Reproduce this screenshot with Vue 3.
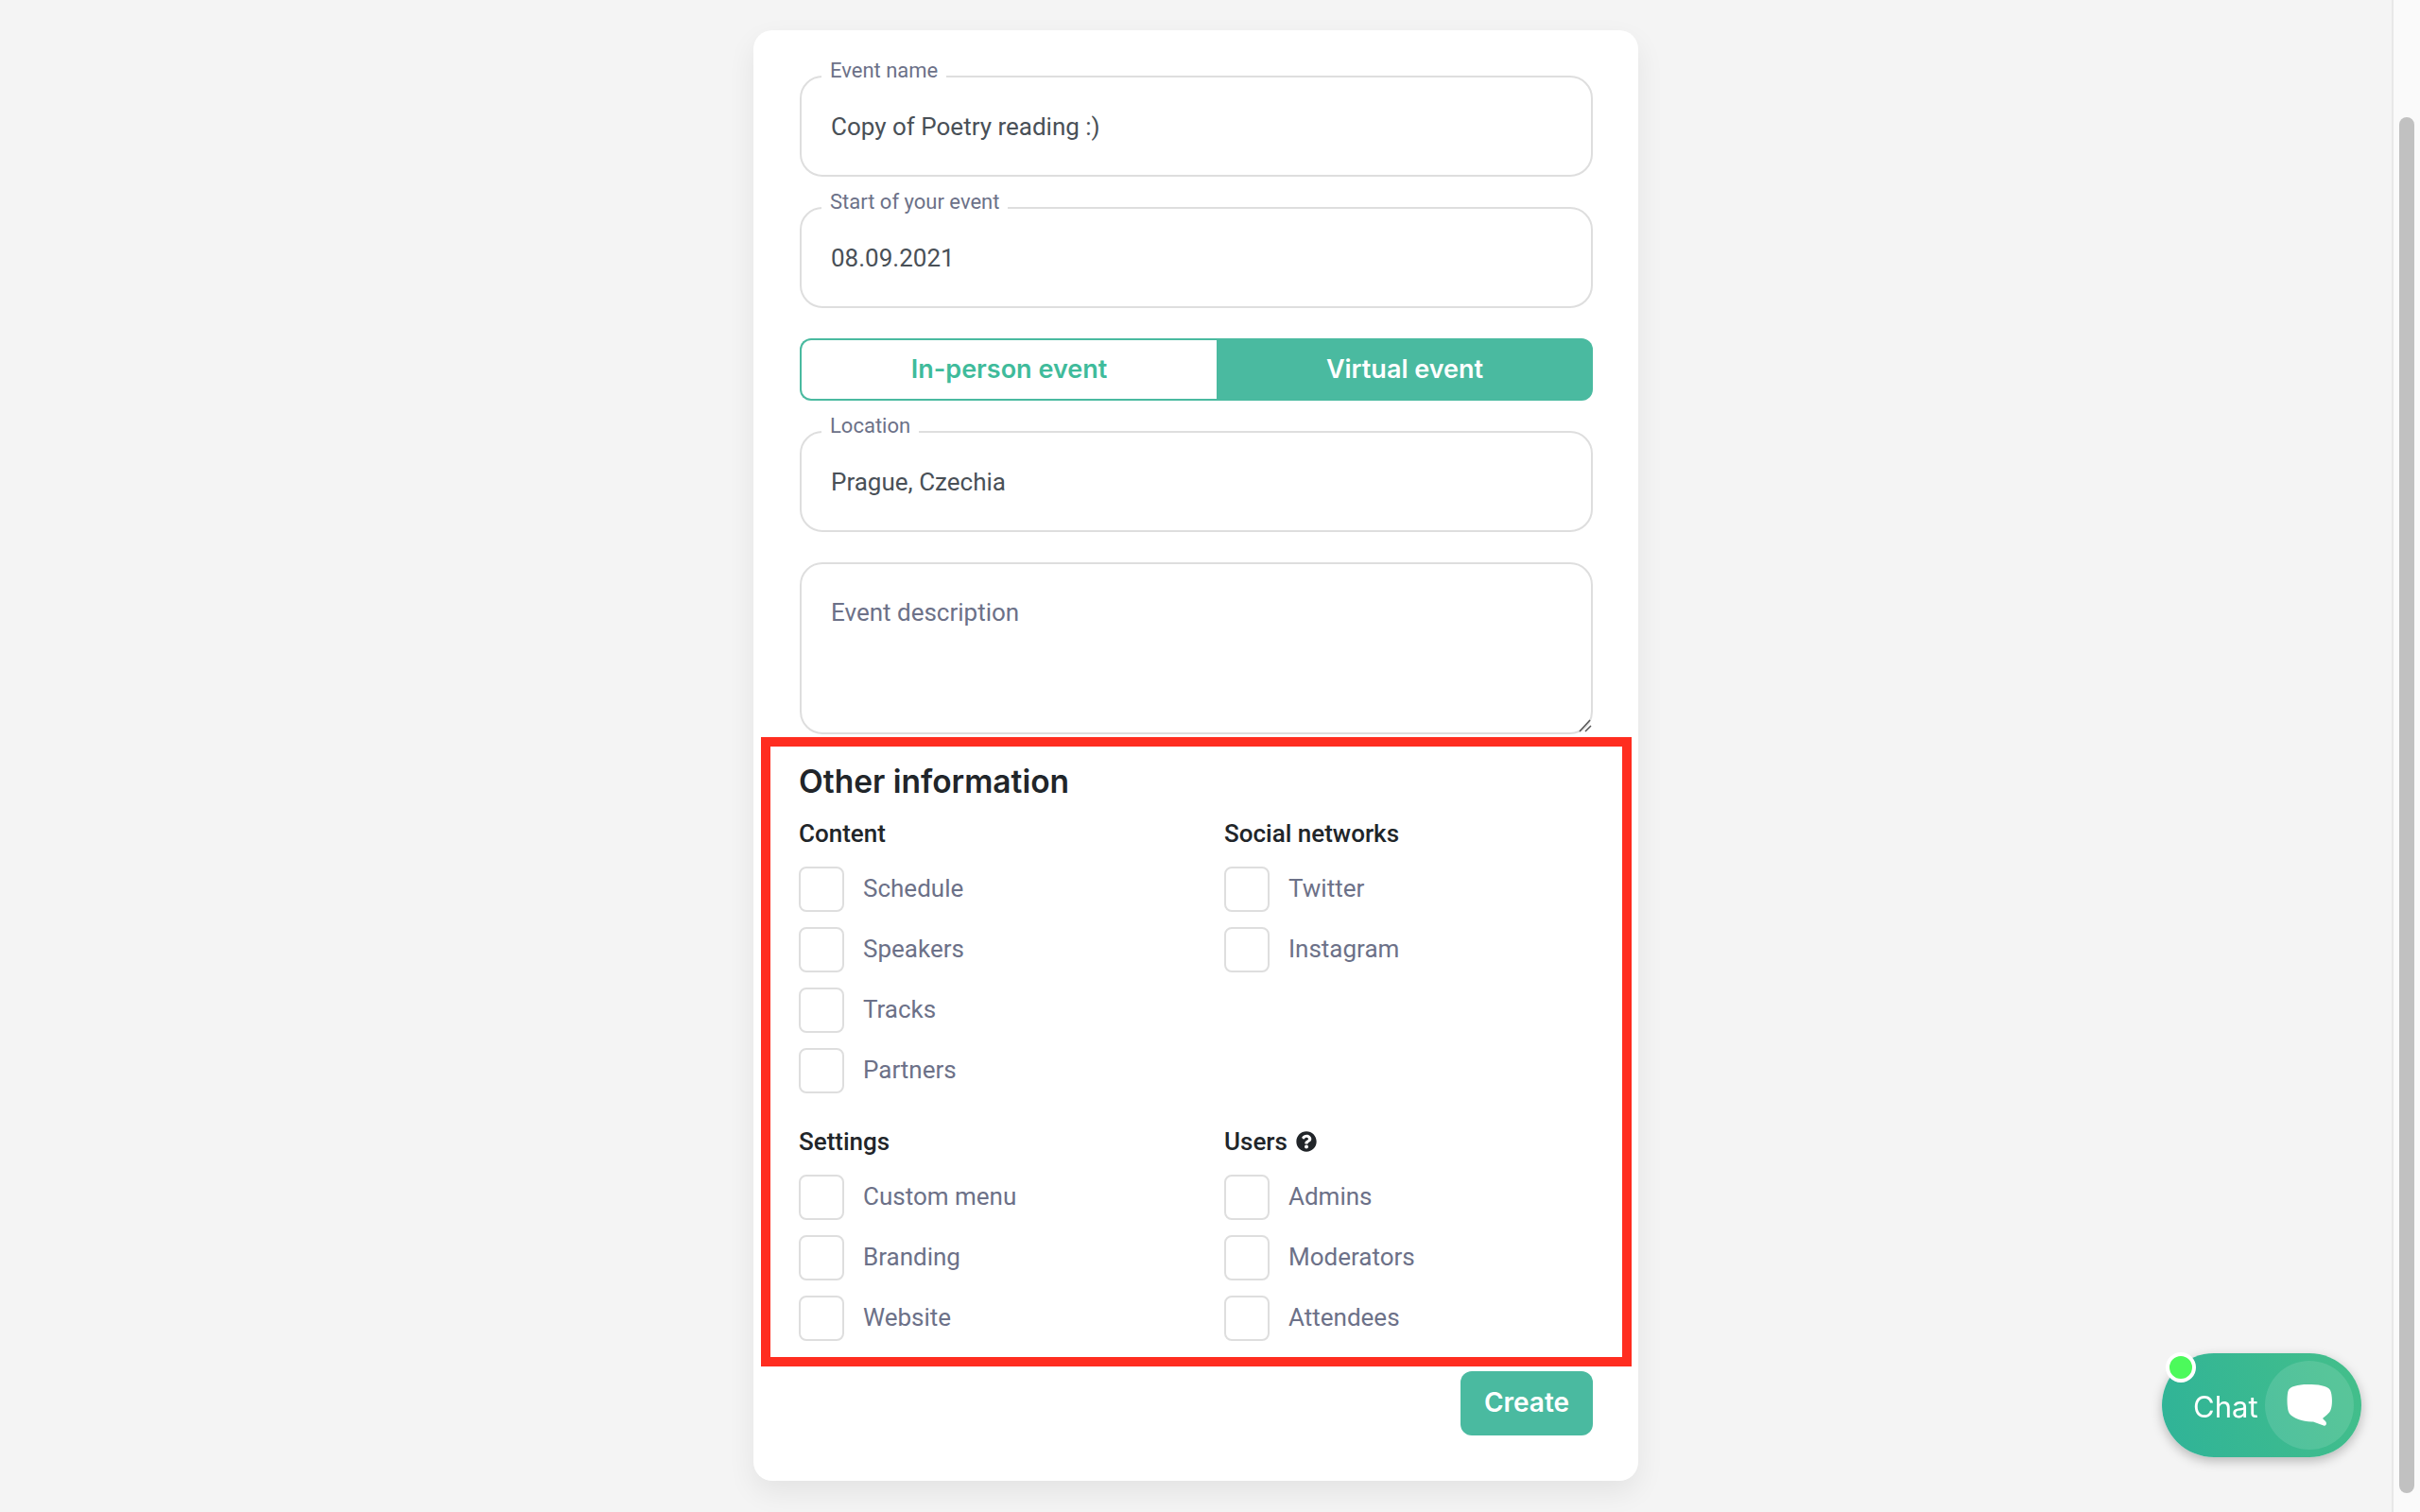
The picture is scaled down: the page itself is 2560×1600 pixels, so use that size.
<template>
  <div class="page">
    <main class="content">
      <form class="card" @submit.prevent>
        <div class="field">
          <label class="field-label">Event name</label>
          <input v-model="form.name" class="field-input" type="text">
        </div>
        <div class="field">
          <label class="field-label">Start of your event</label>
          <input v-model="form.start" class="field-input" type="text">
        </div>

        <div class="toggle">
          <button type="button" class="toggle-btn toggle-left">In-person event</button>
          <button type="button" class="toggle-btn toggle-right">Virtual event</button>
        </div>

        <div class="field field-tight">
          <label class="field-label">Location</label>
          <input v-model="form.location" class="field-input" type="text">
        </div>
        <div class="field field-area-wrap">
          <textarea v-model="form.description" class="field-area" placeholder="Event description"></textarea>
          <svg class="grip" width="14" height="14" viewBox="0 0 14 14">
            <path d="M1 13 L12 1 M7 13 L13 7" stroke="#555" stroke-width="1.500" fill="none"/>
          </svg>
        </div>

        <section class="other">
          <h2 class="other-title">Other information</h2>
          <div class="other-grid">
            <div v-for="group in groups" :key="group.title" class="group">
              <h3 class="group-title">
                {{ group.title }}
                <svg v-if="group.help" class="help" viewBox="0 0 512 512">
                  <path fill="#212529" d="M504 256c0 136.997-111.043 248-248 248S8 392.997 8 256C8 119.083 119.043 8 256 8s248 111.083 248 248zM262.655 90c-54.497 0-89.255 22.957-116.549 63.758-3.536 5.286-2.353 12.415 2.715 16.258l34.699 26.31c5.205 3.947 12.621 3.008 16.665-2.122 17.864-22.658 30.113-35.797 57.303-35.797 20.429 0 45.698 13.148 45.698 32.958 0 14.976-12.363 22.667-32.534 33.976C247.128 238.528 216 254.941 216 296v4c0 6.627 5.373 12 12 12h56c6.627 0 12-5.373 12-12v-1.333c0-28.462 83.186-29.647 83.186-106.667 0-58.002-60.165-102-116.531-102zM256 338c-25.365 0-46 20.635-46 46 0 25.364 20.635 46 46 46s46-20.636 46-46c0-25.365-20.635-46-46-46z"/>
                </svg>
              </h3>
              <label v-for="item in group.items" :key="item" class="check">
                <input type="checkbox" class="check-box">
                <span class="check-text">{{ item }}</span>
              </label>
            </div>
          </div>
        </section>

        <div class="actions">
          <button type="submit" class="create">Create</button>
        </div>
      </form>
    </main>

    <aside class="scrollbar">
      <div class="scrollbar-thumb"></div>
    </aside>

    <button class="chat">
      <span class="chat-dot"></span>
      <span class="chat-text">Chat</span>
      <span class="chat-circle">
        <svg width="48" height="44" viewBox="0 0 48 44">
          <path fill="#fff" d="M22 0C33 0 43 1 46 6C48.500 11 48.500 22 46.500 27C45 31 41 33 38 36L41 39C43 41 41.500 44.500 39 43.500L28 39.500C18 40 7 36 3 31C0 27 0 12 1.500 7C3 2 12 0 22 0Z"/>
        </svg>
      </span>
    </button>
  </div>
</template>

<script setup>
import { reactive } from 'vue'

const form = reactive({
  name: 'Copy of Poetry reading :)',
  start: '08.09.2021',
  location: 'Prague, Czechia',
  description: ''
})

const groups = [
  { title: 'Content', items: ['Schedule', 'Speakers', 'Tracks', 'Partners'] },
  { title: 'Social networks', items: ['Twitter', 'Instagram'] },
  { title: 'Settings', items: ['Custom menu', 'Branding', 'Website'] },
  { title: 'Users', help: true, items: ['Admins', 'Moderators', 'Attendees'] }
]
</script>

<style>
html, body { margin: 0; background: #f4f4f4; overflow: hidden; }
</style>

<style scoped>
.page {
  display: flex;
  height: 1600px;
  font-family: Roboto, "Liberation Sans", sans-serif;
  color: #212529;
}

.content { flex: 1; display: flex; justify-content: center; padding-top: 32px; box-sizing: border-box; }

.card {
  width: 936px;
  height: 1535px;
  box-sizing: border-box;
  padding: 48px 48px 48px 49px;
  background: #fff;
  border-radius: 20px;
  box-shadow: 0 12px 30px rgba(0, 0, 0, 0.07);
}

.field { position: relative; margin-bottom: 32px; }
.field-tight { margin-bottom: 32px; }
.field-area-wrap { margin-bottom: 0; }
.field-label {
  position: absolute;
  left: 23px;
  top: -19px;
  padding: 0 9px;
  background: #fff;
  font-size: 22px;
  line-height: 28px;
  color: #6c7188;
}
.field-input, .field-area {
  display: block;
  width: 100%;
  box-sizing: border-box;
  border: 2px solid #dedede;
  border-radius: 24px;
  padding: 0 31px;
  background: #fff;
  font-family: inherit;
  font-size: 26px;
  color: #495057;
  outline: none;
}
.field-input { height: 107px; }
.field-area { height: 182px; padding-top: 35px; line-height: 32px; resize: none; }
.field-area::placeholder { color: #6c7188; opacity: 1; }
.grip { position: absolute; right: 1px; bottom: 2px; }

.toggle { display: flex; height: 66px; margin-bottom: 32px; }
.toggle-btn {
  font-family: Inter, sans-serif;
  font-size: 27px;
  font-weight: 600;
  padding: 0 0 2px;
  cursor: pointer;
}
.toggle-left {
  width: 441px;
  background: #fff;
  color: #3fbb9b;
  border: 2px solid #4abaa0;
  border-right: 0;
  border-radius: 12px 0 0 12px;
}
.toggle-right {
  flex: 1;
  background: #4abaa0;
  color: #fff;
  border: 0;
  border-radius: 0 12px 12px 0;
}

.other {
  margin: 3px -41px 0;
  padding: 13px 30px 17px;
  border: 10px solid #ff2d20;
}
.other-title {
  margin: 0 0 19px;
  font-family: Inter, sans-serif;
  font-size: 33.500px;
  line-height: 48px;
  font-weight: 600;
  color: #212529;
}
.other-grid { display: grid; grid-template-columns: 450px 1fr; row-gap: 39px; }
.group { display: flex; flex-direction: column; gap: 16px; }
.group-title {
  display: flex;
  align-items: center;
  gap: 9px;
  margin: 0 0 7px;
  font-size: 26px;
  line-height: 24px;
  font-weight: 500;
  color: #212529;
}
.help { width: 22px; height: 22px; }
.check { display: flex; align-items: center; gap: 20px; font-size: 26px; color: #6c7188; }
.check-text { margin-top: -2px; }
.check-box {
  appearance: none;
  width: 48px;
  height: 48px;
  margin: 0;
  background: #fff;
  border: 2px solid #dedede;
  border-radius: 8px;
}

.actions { display: flex; justify-content: flex-end; margin-top: 5px; }
.create {
  width: 140px;
  height: 68px;
  border: 0;
  border-radius: 12px;
  background: #4abaa0;
  color: #fff;
  font-family: Inter, sans-serif;
  font-size: 28px;
  font-weight: 600;
  padding: 0 0 2px;
  cursor: pointer;
}

.scrollbar {
  width: 30px;
  padding-top: 124px;
  padding-bottom: 20px;
  box-sizing: border-box;
  background: #fafafa;
  border-left: 2px solid #e8e8e8;
  display: flex;
  justify-content: center;
}
.scrollbar-thumb { width: 16px; height: 100%; border-radius: 8px; background: #c1c1c1; }

.chat {
  position: fixed;
  right: 62px;
  bottom: 58px;
  display: flex;
  align-items: center;
  width: 211px;
  height: 110px;
  padding: 0 8px 0 33px;
  box-sizing: border-box;
  border: 0;
  border-radius: 55px;
  background: linear-gradient(70deg, #2fb398, #44bf8a);
  box-shadow: 0 4px 12px rgba(0, 0, 0, 0.25);
  color: #fff;
  cursor: pointer;
}
.chat-dot {
  position: absolute;
  left: 4px;
  top: -1px;
  width: 24px;
  height: 24px;
  border: 4px solid #fff;
  border-radius: 50%;
  background: #4cfa5b;
}
.chat-text {
  font-family: Inter, sans-serif;
  font-size: 31px;
  font-weight: 400;
  margin-top: 2px;
}
.chat-circle {
  margin-left: auto;
  width: 94px;
  height: 94px;
  border-radius: 50%;
  background: rgba(255, 255, 255, 0.12);
  display: flex;
  align-items: center;
  justify-content: center;
}
</style>
